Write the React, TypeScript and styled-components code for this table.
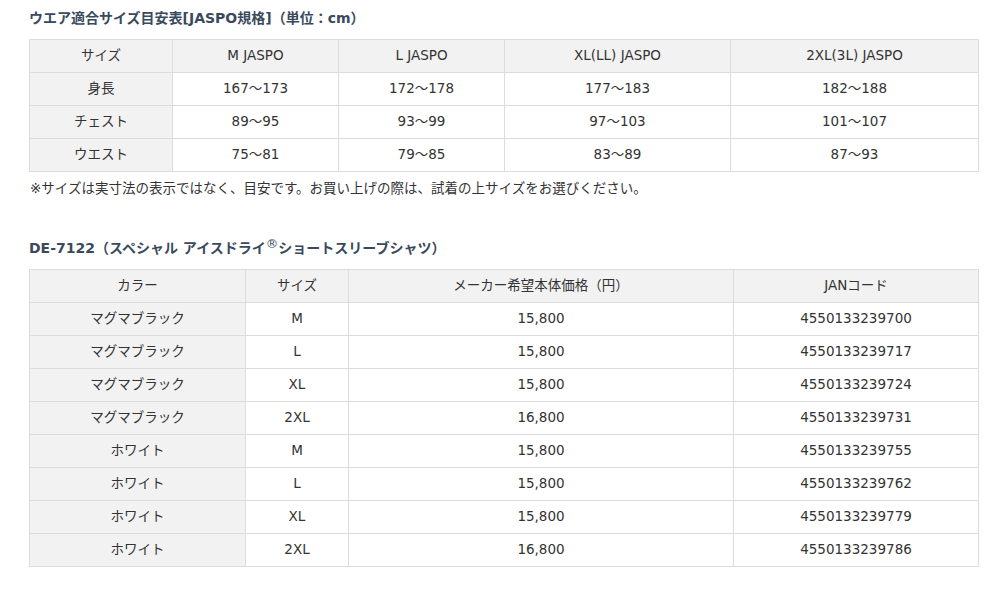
import React from "react";
import styled, { createGlobalStyle } from "styled-components";

const Global = createGlobalStyle`
  html, body { margin: 0; padding: 0; background: #fff; }
  body { font-family: "DejaVu Sans", "Noto Sans CJK JP", sans-serif; color: #333; }
`;

const Page = styled.div`
  padding: 8px 17px 0 29px;
  width: 949px;
`;

const Title = styled.h2<{ $top?: number }>`
  margin: ${(p) => p.$top ?? 0}px 0 11px 0;
  font-size: 14px;
  line-height: 20px;
  font-weight: bold;
  color: #3a4a5c;
  font-family: "DejaVu Sans", "Noto Sans CJK JP", sans-serif;
`;

const Table = styled.table`
  width: 949px;
  border-collapse: collapse;
  table-layout: fixed;
  font-size: 13.5px;
`;

const Cell = styled.td<{ $head?: boolean }>`
  height: 30px;
  padding: 0 0 2px 0;
  border: 1px solid #dcdcdc;
  text-align: center;
  vertical-align: middle;
  line-height: 20px;
  background: ${(p) => (p.$head ? "#f2f2f2" : "#fff")};
  color: #333;
  font-weight: normal;
  white-space: nowrap;
`;

const Note = styled.p`
  margin: 6px 0 0 1px;
  font-size: 13.5px;
  line-height: 20px;
  color: #333;
`;

const Sup = styled.sup`
  font-size: 12.5px;
  font-weight: normal;
  line-height: 0;
  vertical-align: 5px;
`;

const sizeCols = [143, 166, 166, 226, 248];
const sizeHead = ["サイズ", "M JASPO", "L JASPO", "XL(LL) JASPO", "2XL(3L) JASPO"];
const sizeRows = [
  ["身長", "167〜173", "172〜178", "177〜183", "182〜188"],
  ["チェスト", "89〜95", "93〜99", "97〜103", "101〜107"],
  ["ウエスト", "75〜81", "79〜85", "83〜89", "87〜93"],
];

const prodCols = [216, 103, 385, 245];
const prodHead = ["カラー", "サイズ", "メーカー希望本体価格（円）", "JANコード"];
const prodRows = [
  ["マグマブラック", "M", "15,800", "4550133239700"],
  ["マグマブラック", "L", "15,800", "4550133239717"],
  ["マグマブラック", "XL", "15,800", "4550133239724"],
  ["マグマブラック", "2XL", "16,800", "4550133239731"],
  ["ホワイト", "M", "15,800", "4550133239755"],
  ["ホワイト", "L", "15,800", "4550133239762"],
  ["ホワイト", "XL", "15,800", "4550133239779"],
  ["ホワイト", "2XL", "16,800", "4550133239786"],
];

function DataTable({ cols, head, rows }: { cols: number[]; head: string[]; rows: string[][] }) {
  return (
    <Table>
      <colgroup>
        {cols.map((w, i) => (
          <col key={i} style={{ width: w }} />
        ))}
      </colgroup>
      <tbody>
        <tr>
          {head.map((h, i) => (
            <Cell as="th" $head key={i}>
              {h}
            </Cell>
          ))}
        </tr>
        {rows.map((r, ri) => (
          <tr key={ri}>
            {r.map((c, ci) => (
              <Cell $head={ci === 0} key={ci}>
                {c}
              </Cell>
            ))}
          </tr>
        ))}
      </tbody>
    </Table>
  );
}

export default function App() {
  return (
    <>
      <Global />
      <Page>
        <Title>ウエア適合サイズ目安表[JASPO規格]（単位：cm）</Title>
        <DataTable cols={sizeCols} head={sizeHead} rows={sizeRows} />
        <Note>※サイズは実寸法の表示ではなく、目安です。お買い上げの際は、試着の上サイズをお選びください。</Note>
        <Title $top={40}>
          DE-7122（スペシャル アイスドライ<Sup>®</Sup>ショートスリーブシャツ）
        </Title>
        <DataTable cols={prodCols} head={prodHead} rows={prodRows} />
      </Page>
    </>
  );
}
